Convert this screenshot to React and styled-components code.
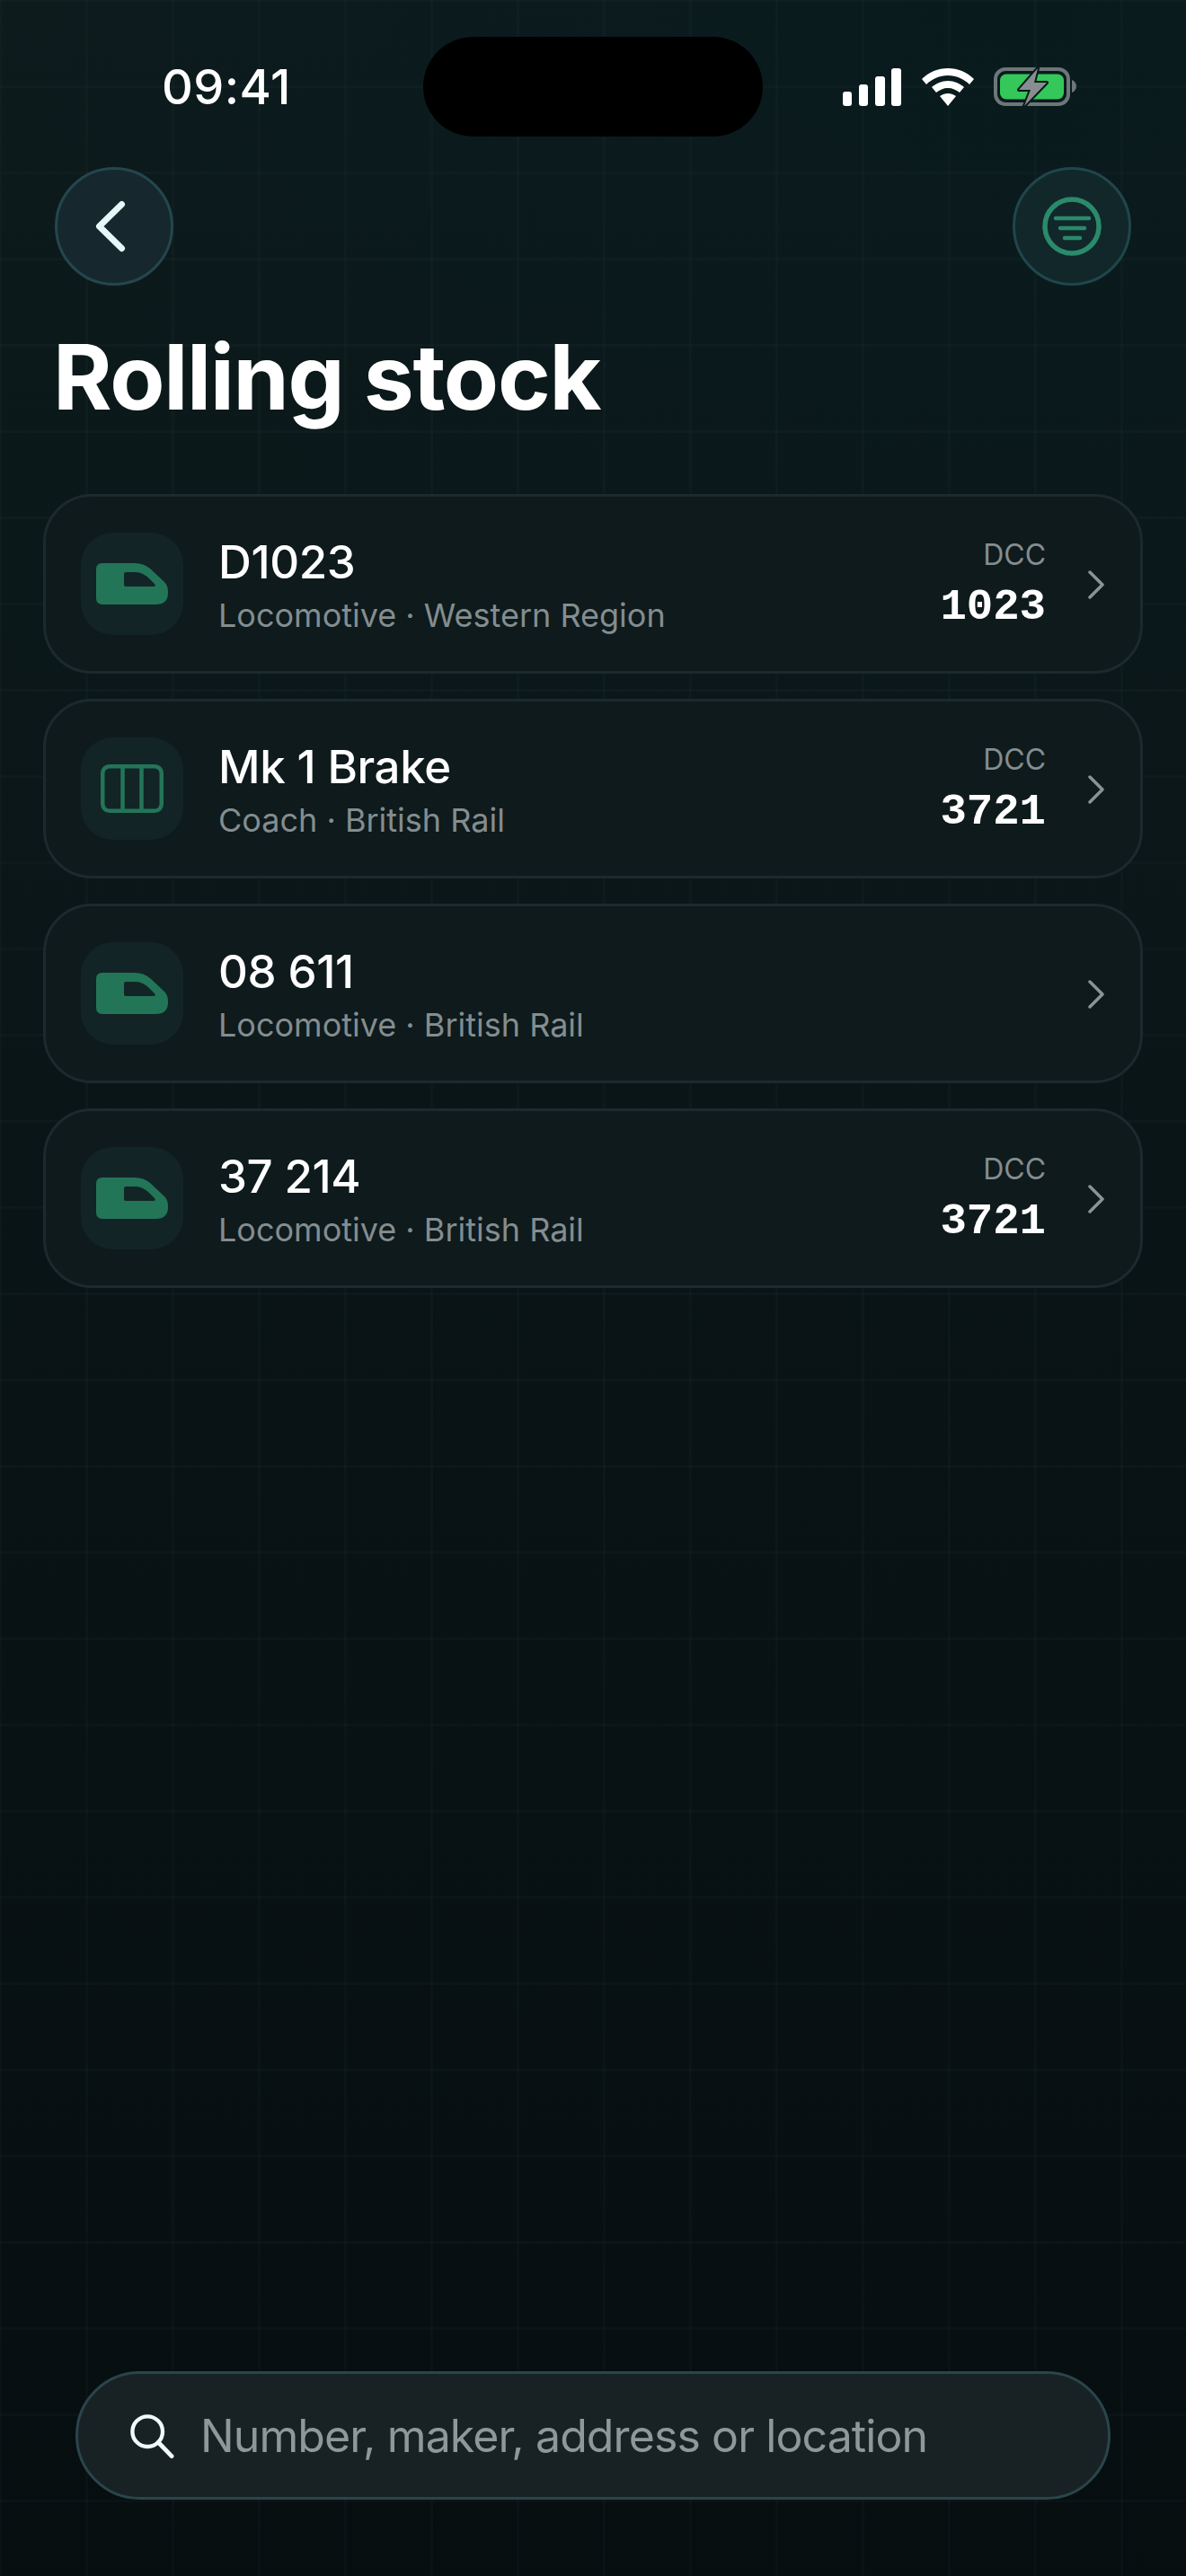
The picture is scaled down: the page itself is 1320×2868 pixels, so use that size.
import React from 'react'
import styled, { createGlobalStyle } from 'styled-components'

const GlobalStyle = createGlobalStyle`
  html, body { margin: 0; padding: 0; background: #071012; }
  * { box-sizing: border-box; }
`

const stock = [
  { id: 1, name: 'D1023', sub: 'Locomotive · Western Region', kind: 'loco', dcc: '1023' },
  { id: 2, name: 'Mk 1 Brake', sub: 'Coach · British Rail', kind: 'coach', dcc: '3721' },
  { id: 3, name: '08 611', sub: 'Locomotive · British Rail', kind: 'loco' },
  { id: 4, name: '37 214', sub: 'Locomotive · British Rail', kind: 'loco', dcc: '3721' },
]

const LocoIcon = () => (
  <svg width="80" height="46" viewBox="0 0 80 46">
    <path
      fillRule="evenodd"
      fill="#237558"
      d="M7 0H43Q53 0 60 6L76 21Q80 25 80 32V33Q80 46 66 46H7Q0 46 0 39V7Q0 0 7 0ZM33 10Q31 10 31 12V24Q31 26 33 26H64Q67 26 65 23L60 18Q52 10 44 10Z"
    />
  </svg>
)

const CoachIcon = () => (
  <svg width="70" height="54" viewBox="0 0 70 54" fill="none" stroke="#237558" strokeWidth="4.5">
    <rect x="2.25" y="2.25" width="65.5" height="49.5" rx="7.5" />
    <path d="M24.5 2V52M45.5 2V52" />
  </svg>
)

const App = () => (
  <>
    <GlobalStyle />
    <Screen>
      <StatusBar>
        <Clock>09:41</Clock>
        <Island />
        <StatusIcons>
          <svg width="66" height="42" viewBox="0 0 66 42" fill="#fff">
            <rect x="1" y="26" width="10" height="16" rx="3" />
            <rect x="19" y="18" width="10" height="24" rx="3" />
            <rect x="37" y="9" width="11" height="33" rx="3" />
            <rect x="55" y="0" width="11" height="42" rx="3" />
          </svg>
          <svg width="58" height="42" viewBox="0 0 58 42">
            <path fill="#fff" d="M29 0C18 0 8 4 0 12L5 18C11 12 20 8 29 8S47 12 53 18L58 12C50 4 40 0 29 0Z" />
            <path fill="#fff" d="M29 14C22 14 16 17 11 21L16 27C20 24 24 22 29 22S38 24 42 27L47 21C42 17 36 14 29 14Z" />
            <path fill="#fff" d="M29 28C26 28 23 29 20 31L29 42L38 31C35 29 32 28 29 28Z" />
          </svg>
          <svg width="92" height="44" viewBox="0 0 92 44">
            <rect x="2" y="2" width="81" height="39" rx="11" fill="none" stroke="#6d7678" strokeWidth="4" />
            <rect x="7" y="7.5" width="71" height="28" rx="7" fill="#34c759" />
            <path d="M87 14C90 15 92 18 92 21S90 27 87 28Z" fill="#6d7678" />
            <path
              d="M49 1L28 25H41L34 43L59 17H45Z"
              fill="#868e90"
              stroke="#0b1719"
              strokeWidth="4"
              strokeLinejoin="round"
              paintOrder="stroke"
            />
          </svg>
        </StatusIcons>
      </StatusBar>

      <Header>
        <RoundButton>
          <svg width="46" height="68" viewBox="0 0 46 68" fill="none">
            <path d="M31.5 9.5L6.5 34L31.5 58.5" stroke="#e6f7fa" strokeWidth="7" strokeLinecap="round" strokeLinejoin="round" />
          </svg>
        </RoundButton>
        <RoundButton $accent>
          <svg width="66" height="66" viewBox="0 0 66 66" fill="none" stroke="#2a8a6b" strokeLinecap="round">
            <circle cx="33" cy="33" r="30" strokeWidth="5.5" />
            <path d="M15 24H52M20 35H47M25 46H42" strokeWidth="4.5" />
          </svg>
        </RoundButton>
      </Header>

      <Title>Rolling stock</Title>

      <List>
        {stock.map((item) => (
          <Card key={item.id}>
            <IconTile>{item.kind === 'loco' ? <LocoIcon /> : <CoachIcon />}</IconTile>
            <Info>
              <Name>{item.name}</Name>
              <Sub>{item.sub}</Sub>
            </Info>
            {item.dcc && (
              <Address>
                <AddressLabel>DCC</AddressLabel>
                <AddressValue>{item.dcc}</AddressValue>
              </Address>
            )}
            <Chevron width="18" height="32" viewBox="0 0 18 32" fill="none">
              <path d="M2 2L16 16L2 30" stroke="#8a9496" strokeWidth="3.5" strokeLinecap="round" strokeLinejoin="round" />
            </Chevron>
          </Card>
        ))}
      </List>

      <SearchBar>
        <svg width="50" height="50" viewBox="0 0 52 52" fill="none" stroke="#f2fbfb">
          <circle cx="21" cy="21" r="17.5" strokeWidth="4.5" />
          <path d="M33.5 33.5L49 49.5" strokeWidth="5" strokeLinecap="round" />
        </svg>
        <Placeholder>Number, maker, address or location</Placeholder>
      </SearchBar>
    </Screen>
  </>
)

export default App

const Screen = styled.div`
  position: relative;
  display: flex;
  flex-direction: column;
  width: 1320px;
  height: 2868px;
  overflow: hidden;
  font-family: Inter, "Liberation Sans", sans-serif;
  color: #fff;
  background-color: #081113;
  background-image:
    linear-gradient(rgba(190, 230, 230, 0.02) 3px, transparent 3px),
    linear-gradient(90deg, rgba(190, 230, 230, 0.02) 3px, transparent 3px),
    radial-gradient(1100px 800px at 85% 0%, rgba(4, 26, 32, 0.4), transparent 100%),
    linear-gradient(180deg, #0d1b1d 0%, #0a1618 35%, #081113 70%, #060e10 100%);
  background-size: 96px 96px, 96px 96px, 100% 100%, 100% 100%;
  background-position: 0 -1px, -1px 0, 0 0, 0 0;
`

const StatusBar = styled.div`
  display: flex;
  align-items: center;
  justify-content: space-between;
  height: 111px;
  margin-top: 41px;
  padding: 0 122px 0 180px;
`

const Clock = styled.div`
  width: 143px;
  font-size: 54px;
  font-weight: 500;
  line-height: 111px;
  letter-spacing: 0.4px;
  white-space: nowrap;
`

const Island = styled.div`
  position: absolute;
  top: 41px;
  left: 471px;
  width: 378px;
  height: 111px;
  border-radius: 56px;
  background: #000;
`

const StatusIcons = styled.div`
  display: flex;
  align-items: center;
  gap: 22.5px;
`

const Header = styled.div`
  display: flex;
  justify-content: space-between;
  margin-top: 34px;
  padding: 0 61px;
`

const RoundButton = styled.div`
  display: flex;
  align-items: center;
  justify-content: center;
  width: 132px;
  height: 132px;
  border-radius: 50%;
  border: 3px solid ${(p) => (p.$accent ? '#1f464c' : '#25464e')};
  background: ${(p) => (p.$accent ? '#12272a' : '#16282d')};
`

const Title = styled.h1`
  margin: 44px 0 0 59px;
  font-size: 100px;
  font-weight: 700;
  line-height: 116px;
  letter-spacing: -1.3px;
`

const List = styled.div`
  display: flex;
  flex-direction: column;
  gap: 28px;
  margin-top: 72px;
  padding: 0 48px;
`

const Card = styled.div`
  display: flex;
  align-items: center;
  height: 200px;
  padding: 0 40px 0 39px;
  border: 3px solid #1c2a2d;
  border-radius: 54px;
  background: #0e1a1c;
`

const IconTile = styled.div`
  flex: none;
  display: flex;
  align-items: center;
  justify-content: center;
  width: 114px;
  height: 114px;
  border-radius: 36px;
  background: #132426;
`

const Info = styled.div`
  flex: 1;
  margin: 0 0 3px 39px;
  padding-top: 7px;
  min-width: 0;
`

const Name = styled.div`
  font-size: 51px;
  font-weight: 500;
  line-height: 60px;
  letter-spacing: -0.4px;
`

const Sub = styled.div`
  margin-top: 6px;
  font-size: 36px;
  font-weight: 400;
  line-height: 46px;
  color: #848d8f;
`

const Address = styled.div`
  display: flex;
  flex-direction: column;
  align-items: flex-end;
  margin: 3px 0 3px;
`

const AddressLabel = styled.div`
  font-size: 32px;
  line-height: 40px;
  color: #848d8f;
`

const AddressValue = styled.div`
  margin-top: 12px;
  font-family: "Liberation Mono", monospace;
  font-size: 49px;
  font-weight: 700;
  line-height: 52px;
`

const Chevron = styled.svg`
  flex: none;
  margin: 2px 0 0 47px;
`

const SearchBar = styled.div`
  display: flex;
  align-items: center;
  gap: 29px;
  width: 1152px;
  height: 143px;
  margin: auto 0 85px 84px;
  padding: 0 0 0 57px;
  border: 3px solid #2a454b;
  border-radius: 72px;
  background: #182224;
`

const Placeholder = styled.div`
  font-size: 50px;
  line-height: 60px;
  letter-spacing: -0.9px;
  color: #8f9899;
  white-space: nowrap;
`
